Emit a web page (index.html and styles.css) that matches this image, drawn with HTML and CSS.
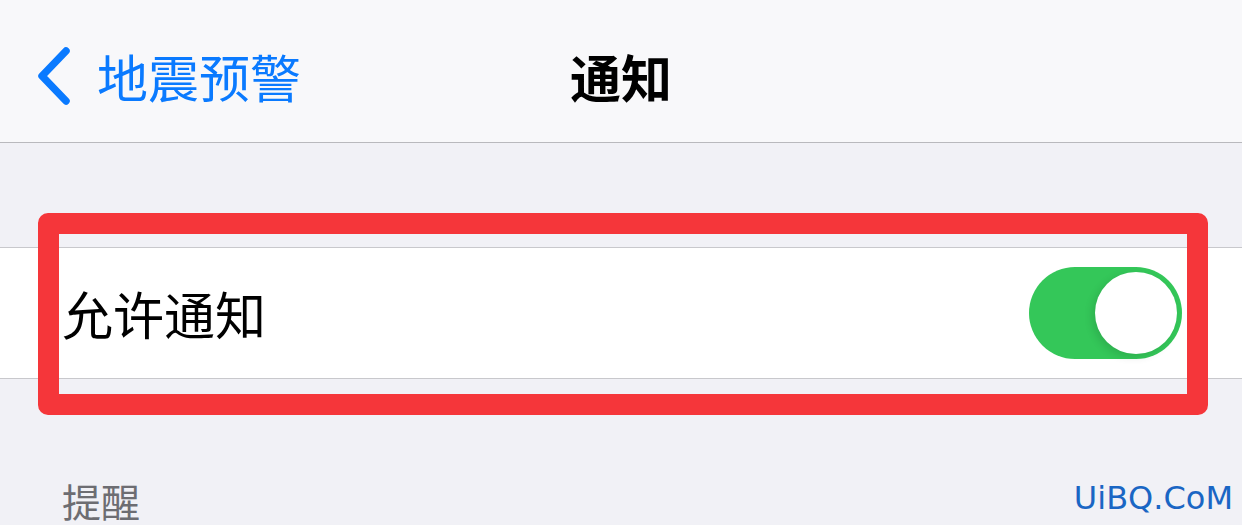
FILE: index.html
```html
<!DOCTYPE html>
<html lang="zh-CN">

<head>
    <meta charset="UTF-8">
    <meta name="viewport" content="width=device-width, initial-scale=1.0">
    <title>通知</title>
    <link rel="stylesheet" href="styles.css">
</head>

<body>
    <div class="nav-bar">
        <a href="#" class="back-link">
            <svg class="chevron" width="40" height="60" viewBox="0 0 40 60">
                <path d="M30 5 L6 30 L30 55" fill="none" stroke="#0a7aff" stroke-width="7.5" stroke-linecap="round" stroke-linejoin="round" />
            </svg>
            <span>地震预警</span>
        </a>
        <div class="nav-title">通知</div>
    </div>

    <div class="group-gap"></div>

    <div class="cell">
        <span class="cell-label">允许通知</span>
        <div class="switch on">
            <div class="knob"></div>
        </div>
    </div>

    <div class="section-header">提醒</div>

    <!-- annotation overlay -->
    <div class="highlight-box"></div>
    <div class="watermark">UiBQ.CoM</div>
</body>

</html>
```

FILE: styles.css
```css
body {
    margin: 0;
    background-color: #f1f1f6;
    font-family: "Noto Sans CJK SC", "Noto Sans", sans-serif;
    height: 525px;
    overflow: hidden;
    position: relative;
}

.nav-bar {
    height: 143px;
    background-color: #f8f8fa;
    border-bottom: 1px solid #b9b9bd;
    display: flex;
    align-items: center;
    justify-content: center;
    position: relative;
    box-sizing: border-box;
    padding-top: 9px;
}

.back-link {
    position: absolute;
    left: 36px;
    top: 46px;
    display: flex;
    align-items: center;
    gap: 21px;
    color: #0a7aff;
    text-decoration: none;
    font-size: 51px;
    line-height: 60px;
}

.chevron {
    display: block;
}

.nav-title {
    font-size: 51px;
    font-weight: bold;
    color: #000;
    line-height: 60px;
}

.group-gap {
    height: 104px;
}

.cell {
    height: 132px;
    background-color: #fff;
    border-top: 1px solid #c8c8cc;
    border-bottom: 1px solid #c8c8cc;
    box-sizing: border-box;
    display: flex;
    align-items: center;
    justify-content: space-between;
    padding: 0 60px 0 62px;
}

.cell-label {
    font-size: 51px;
    color: #000;
    line-height: 60px;
}

.switch {
    width: 153px;
    height: 92px;
    border-radius: 46px;
    background-color: #e9e9eb;
    position: relative;
}

.switch.on {
    background-color: #34c759;
}

.knob {
    position: absolute;
    top: 5px;
    right: 5px;
    width: 82px;
    height: 82px;
    border-radius: 50%;
    background-color: #fff;
    box-shadow: -3px 3px 8px rgba(0, 0, 0, 0.12);
}

.section-header {
    padding: 97px 0 0 62px;
    font-size: 39px;
    color: #6d6d72;
    line-height: 48px;
}

.highlight-box {
    position: absolute;
    left: 38px;
    top: 213px;
    width: 1170px;
    height: 202px;
    border: 21px solid #f5363a;
    border-radius: 10px;
    box-sizing: border-box;
}

.watermark {
    position: absolute;
    right: 9px;
    top: 478px;
    font-family: "DejaVu Sans", sans-serif;
    font-size: 32px;
    color: #1a66c4;
    line-height: 40px;
}
```
